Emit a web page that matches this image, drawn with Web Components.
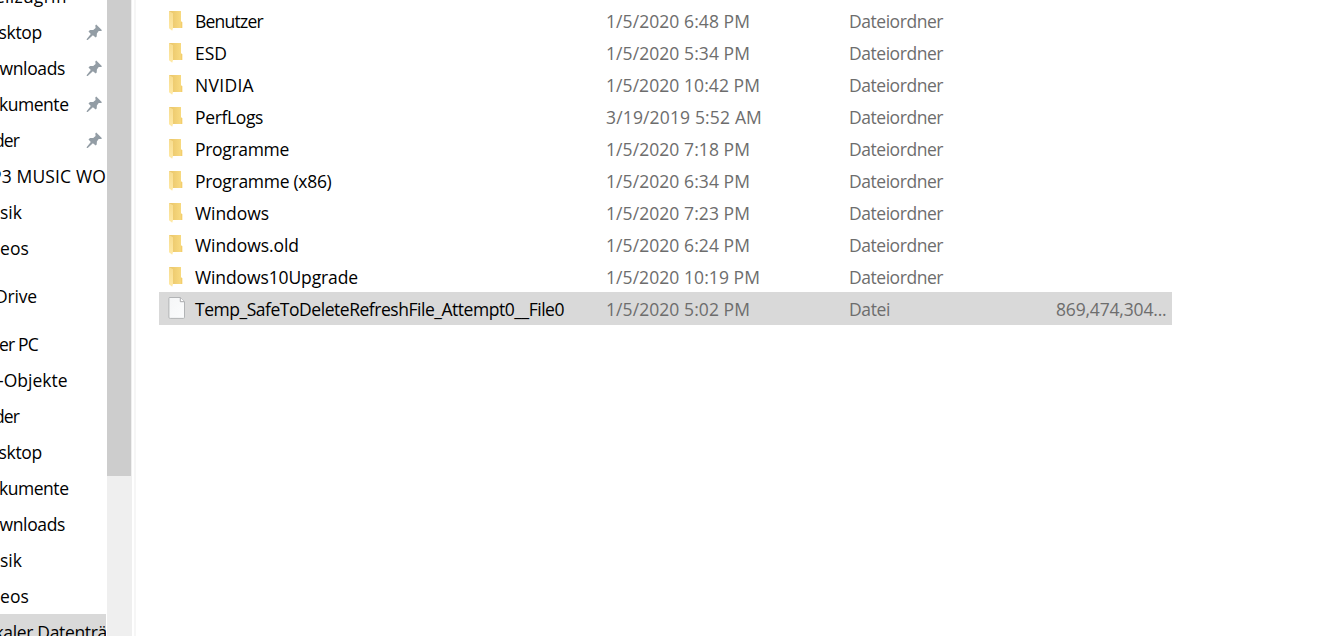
<!DOCTYPE html>
<html lang="de">
<head>
<meta charset="utf-8">
<title>Explorer</title>
<style>html,body{margin:0;height:100%;overflow:hidden;background:#fff}</style>
</head>
<body>
<explorer-window></explorer-window>
<script>
const define = (name, cls) => customElements.define(name, cls);

/* Text label whose tracking is adjusted to a given advance width */
define('fit-text', class extends HTMLElement {
  constructor() {
    super();
    this.attachShadow({mode: 'open'}).innerHTML =
      '<style>:host{display:block;flex:none;white-space:pre}span{display:inline-block}</style><span><slot></slot></span>';
  }
  connectedCallback() {
    const w = parseFloat(this.getAttribute('w'));
    if (!w) return;
    const s = this.shadowRoot.querySelector('span');
    const n = this.textContent.length;
    s.style.letterSpacing = ((w - s.getBoundingClientRect().width) / n) + 'px';
  }
});

define('folder-icon', class extends HTMLElement {
  constructor() {
    super();
    this.attachShadow({mode: 'open'}).innerHTML = `<style>:host{display:block;width:16px;height:22px}svg{display:block}</style>
    <svg width="16" height="22" viewBox="0 0 16 22">
      <defs><linearGradient id="b" x1="0" x2="1"><stop offset="0" stop-color="#e9c468"/><stop offset="1" stop-color="#f9dc82"/></linearGradient>
      <linearGradient id="f" x1="0" x2="0" y1="0" y2="1"><stop offset="0" stop-color="#f7dc8e"/><stop offset="1" stop-color="#ffe9a5"/></linearGradient></defs>
      <path d="M1 1H13V11.3L14.2 12.5V18H4.5Z" fill="url(#b)"/>
      <path d="M13 11.3l1.2 1.2V18H12.8V12.7Z" fill="#f3ce6d"/>
      <path d="M1 1L5 3.2V18L4.2 20.8L1 18.3Z" fill="url(#f)"/>
    </svg>`;
  }
});

define('file-icon', class extends HTMLElement {
  constructor() {
    super();
    this.attachShadow({mode: 'open'}).innerHTML = `<style>:host{display:block;width:18px;height:22px}svg{display:block}</style>
    <svg width="18" height="22" viewBox="0 0 18 22">
      <defs><linearGradient id="p" x1="0" y1="0" x2="1" y2="1"><stop offset="0" stop-color="#f5f6f7"/><stop offset="1" stop-color="#fbfcfd"/></linearGradient></defs>
      <path d="M1.5 .5H12.3L16.5 4.7V20.3Q16.5 21.4 15.4 21.4H2.2Q.9 21.4 .9 20.3V1.3Q.9 .5 1.8 .5Z" fill="url(#p)" stroke="#b2b4b6"/>
      <path d="M12.3 .7V4.7H16.3" fill="#fff" stroke="#a5a7a9"/>
    </svg>`;
  }
});

define('pin-icon', class extends HTMLElement {
  constructor() {
    super();
    this.attachShadow({mode: 'open'}).innerHTML = `<style>:host{display:block;width:17px;height:17px}svg{display:block}</style>
    <svg width="17" height="17" viewBox="0 0 17 17">
      <path d="M10.2 .5L16 6.2L15.1 7L12.7 7.1L10.9 9.6L10.7 12.4L9.7 13.4L6.9 11.2L1.7 16L.7 16L.8 14.9L4.8 9.9L2.5 7.5L4 6L7.2 6.1L9.6 4L9.3 1.6Z" fill="#939da5"/>
    </svg>`;
  }
});

define('nav-item', class extends HTMLElement {
  constructor() {
    super();
    this.attachShadow({mode: 'open'}).innerHTML = `<style>
      :host{display:flex;flex:none;height:36px;width:106px;box-sizing:border-box;overflow:hidden;justify-content:space-between;padding-right:3px}
      :host([gap]){margin-top:12px}
      :host([selected]){background:#d9d9d9;padding-right:0}
      .label{display:flex;justify-content:flex-end;flex:none;line-height:36px;height:36px}
      pin-icon{margin-top:9.5px;flex:none}
    </style><div class="label"><slot></slot></div>`;
  }
  connectedCallback() {
    const l = this.shadowRoot.querySelector('.label');
    l.style.width = this.getAttribute('end') + 'px';
    if (this.hasAttribute('pinned')) this.shadowRoot.append(document.createElement('pin-icon'));
  }
});

define('nav-pane', class extends HTMLElement {
  constructor() {
    super();
    const items = [
      ['ellzugriff', 68, 73], ['sktop', 42, 43.5, 'pinned'], ['wnloads', 65, 65.5, 'pinned'],
      ['kumente', 68.5, 69.5, 'pinned'], ['der', 19, 25, 'pinned'], ['P3 MUSIC WO', 106, 115],
      ['sik', 22, 22], ['eos', 29, 29], ['Drive', 37, 42, 'gap'], ['er PC', 38, 39, 'gap'],
      ['-Objekte', 67.5, 69.5], ['der', 19, 25], ['sktop', 42, 43.5], ['kumente', 68.5, 69.5],
      ['wnloads', 65, 65.5], ['sik', 22, 22], ['eos', 29, 29], ['kaler Datenträg', 116, 121.5, 'selected']
    ];
    this.attachShadow({mode: 'open'}).innerHTML = `<style>
      :host{display:flex;flex-direction:column;width:107px;height:636px;overflow:hidden;color:#000}
      nav-item:first-of-type{margin-top:-22px}
    </style>` + items.map(([t, end, w, a = '']) => `<nav-item end="${end}" ${a}><fit-text w="${w}">${t}</fit-text></nav-item>`).join('');
  }
});

define('scroll-track', class extends HTMLElement {
  constructor() {
    super();
    this.attachShadow({mode: 'open'}).innerHTML = `<style>
      :host{display:block;width:25px;height:636px;background:#efefef}
      div{width:24px;height:476px;background:#cdcdcd}
    </style><div></div>`;
  }
});

define('file-row', class extends HTMLElement {
  constructor() {
    super();
    this.attachShadow({mode: 'open'}).innerHTML = `<style>
      :host{display:grid;grid-template-columns:36px 411px 243px 180px 137px;width:1013px;height:32px;line-height:35px;color:#6d6d6d;box-sizing:border-box}
      :host([selected]){height:33px;background:#d9d9d9}
      ::slotted([slot=icon]){margin:6px 0 0 9px}
      ::slotted(file-icon){margin:5px 0 0 9px!important}
      ::slotted([slot=name]){color:#000}
    </style><slot name="icon"></slot><slot name="name"></slot><slot name="date"></slot><slot name="type"></slot><slot name="size"></slot>`;
  }
});

define('file-list', class extends HTMLElement {
  constructor() {
    super();
    const rows = [
      ['Benutzer', 68, '1/5/2020 6:48 PM', 144], ['ESD', 32, '1/5/2020 5:34 PM', 144],
      ['NVIDIA', 59, '1/5/2020 10:42 PM', 154], ['PerfLogs', 68, '3/19/2019 5:52 AM', 156],
      ['Programme', 94, '1/5/2020 7:18 PM', 144], ['Programme (x86)', 136.5, '1/5/2020 6:34 PM', 144],
      ['Windows', 74, '1/5/2020 7:23 PM', 144], ['Windows.old', 104, '1/5/2020 6:24 PM', 144],
      ['Windows10Upgrade', 163, '1/5/2020 10:19 PM', 154]
    ];
    this.attachShadow({mode: 'open'}).innerHTML = `<style>:host{display:block;padding:4px 0 0 23px}</style>` +
      rows.map(([n, w, d, dw]) => `<file-row><folder-icon slot="icon"></folder-icon><fit-text slot="name" w="${w}">${n}</fit-text><fit-text slot="date" w="${dw}">${d}</fit-text><fit-text slot="type" w="94">Dateiordner</fit-text></file-row>`).join('') +
      `<file-row selected><file-icon slot="icon"></file-icon><fit-text slot="name" w="369">Temp_SafeToDeleteRefreshFile_Attempt0__File0</fit-text><fit-text slot="date" w="144">1/5/2020 5:02 PM</fit-text><fit-text slot="type" w="41">Datei</fit-text><fit-text slot="size" w="110.5" style="margin-left:27px">869,474,304...</fit-text></file-row>`;
  }
});

define('explorer-window', class extends HTMLElement {
  constructor() {
    super();
    this.attachShadow({mode: 'open'}).innerHTML = `<style>
      :host{display:flex;width:1342px;height:636px;overflow:hidden;background:#fff;font:17.5px "Open Sans","Noto Sans",sans-serif}
      .split{width:2px;margin-left:2px;background:#f6f6f6}
    </style><nav-pane></nav-pane><scroll-track></scroll-track><div class="split"></div><file-list></file-list>`;
  }
});
</script>
</body>
</html>
